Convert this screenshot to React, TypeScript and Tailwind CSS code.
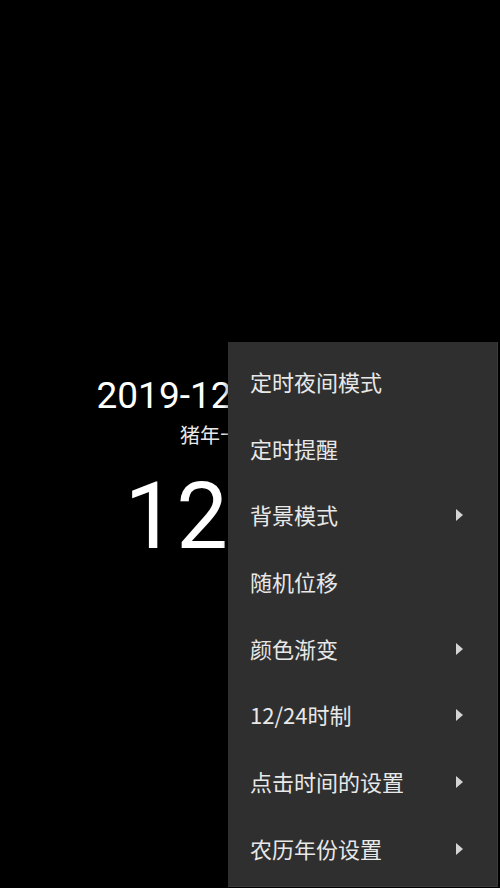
import React from "react";

const items: { label: string; arrow: boolean }[] = [
  { label: "定时夜间模式", arrow: false },
  { label: "定时提醒", arrow: false },
  { label: "背景模式", arrow: true },
  { label: "随机位移", arrow: false },
  { label: "颜色渐变", arrow: true },
  { label: "12/24时制", arrow: true },
  { label: "点击时间的设置", arrow: true },
  { label: "农历年份设置", arrow: true },
];

export default function App() {
  return (
    <div
      className="relative w-[500px] h-[888px] bg-black overflow-hidden text-white"
      style={{ fontFamily: 'Roboto, "Noto Sans CJK SC", sans-serif' }}
    >
      <div className="flex flex-col items-center pt-[370px]">
        <div className="text-[37px] leading-[52px] whitespace-nowrap">2019-12-18 星期三</div>
        <div className="text-[20px] leading-[28px] text-[#e8e8e8] whitespace-nowrap">猪年十一月廿三</div>
        <div className="text-[92px] leading-[110px] whitespace-nowrap mt-[12px] pr-[22px]">12:36</div>
      </div>

      <div className="absolute left-[228px] top-[342px] w-[270px] h-[545px] bg-[#2f2f2f] border-r border-b border-[#3b3b3b] pt-[6px] shadow-[0_0_6px_rgba(0,0,0,0.6)]">
        {items.map((it) => (
          <div key={it.label} className="h-[66.7px] flex items-center pl-[22px] pr-[34px]">
            <span
              className="flex-1 text-[22px] text-[#e8e8e8] whitespace-nowrap"
              style={{ fontFamily: '"Noto Sans CJK SC", Roboto, sans-serif' }}
            >
              {it.label}
            </span>
            {it.arrow && (
              <svg width="7" height="12" viewBox="0 0 7 12" className="mt-[1px]">
                <path d="M0 0 L7 6 L0 12 Z" fill="#d4d4d4" />
              </svg>
            )}
          </div>
        ))}
      </div>
    </div>
  );
}
